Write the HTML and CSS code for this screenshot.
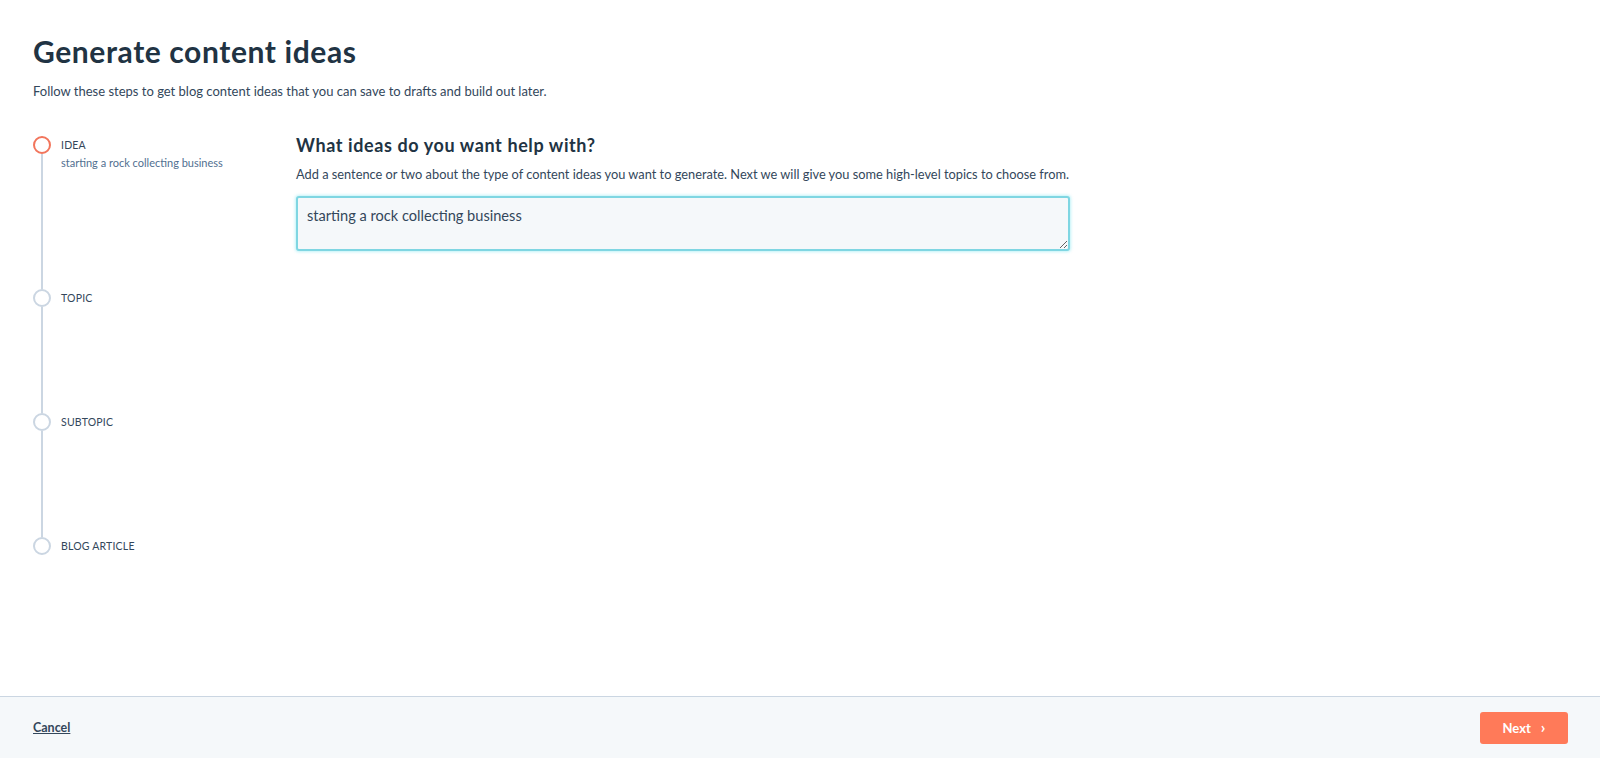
FILE: index.html
```html
<!DOCTYPE html>
<html lang="en">
<head>
    <meta charset="UTF-8">
    <meta name="viewport" content="width=device-width, initial-scale=1.0">
    <title>Generate content ideas</title>
    <link rel="stylesheet" href="styles.css">
</head>
<body>
    <div class="page">
        <main class="main">
            <h1 class="title">Generate content ideas</h1>
            <p class="intro">Follow these steps to get blog content ideas that you can save to drafts and build out later.</p>

            <div class="wizard">
                <ol class="steps">
                    <li class="step active">
                        <div class="rail"><span class="dot"></span><span class="line"></span></div>
                        <div class="step-text">
                            <div class="step-label">IDEA</div>
                            <div class="step-sub">starting a rock collecting business</div>
                        </div>
                    </li>
                    <li class="step">
                        <div class="rail"><span class="dot"></span><span class="line"></span></div>
                        <div class="step-text">
                            <div class="step-label">TOPIC</div>
                        </div>
                    </li>
                    <li class="step">
                        <div class="rail"><span class="dot"></span><span class="line"></span></div>
                        <div class="step-text">
                            <div class="step-label">SUBTOPIC</div>
                        </div>
                    </li>
                    <li class="step last">
                        <div class="rail"><span class="dot"></span></div>
                        <div class="step-text">
                            <div class="step-label">BLOG ARTICLE</div>
                        </div>
                    </li>
                </ol>

                <section class="panel">
                    <h2 class="panel-title">What ideas do you want help with?</h2>
                    <p class="panel-help">Add a sentence or two about the type of content ideas you want to generate. Next we will give you some high-level topics to choose from.</p>
                    <textarea class="idea-input">starting a rock collecting business</textarea>
                </section>
            </div>
        </main>

        <footer class="footer">
            <a href="#" class="cancel">Cancel</a>
            <button class="next">Next <span class="chev">&#8250;</span></button>
        </footer>
    </div>
</body>
</html>
```

FILE: styles.css
```css
body { margin: 0; font-family: Lato, "Open Sans", sans-serif; color: #33475b; background: #fff; }
.page { display: flex; flex-direction: column; height: 100vh; }
.main { flex: 1; padding: 30px 32px 0 33px; }

.title { margin: 0; font-size: 30px; line-height: 42px; font-weight: 700; color: #213343; letter-spacing: 0.6px; }
.intro { margin: 10px 0 0; font-size: 13px; line-height: 18px; color: #33475b; }

.wizard { display: flex; margin-top: 36px; }

.steps { list-style: none; margin: 0; padding: 0; width: 263px; flex-shrink: 0; }
.step { display: flex; gap: 10px; min-height: 124px; }
.step.active { min-height: 153px; }
.step.last { min-height: 0; }
.rail { display: flex; flex-direction: column; align-items: center; width: 18px; }
.dot { width: 14px; height: 14px; border: 2px solid #cbd6e2; border-radius: 50%; flex-shrink: 0; }
.step.active .dot { border-color: #f2755c; }
.line { flex: 1; width: 2px; background: #cbd6e2; }
.step-text { padding-top: 1px; }
.step-label { font-size: 10.5px; line-height: 16px; color: #33475b; letter-spacing: 0.2px; }
.step-sub { margin-top: 2px; font-size: 11px; line-height: 16px; color: #516f90; }

.panel { flex: 1; max-width: 774px; }
.panel-title { margin: 0; font-size: 18px; line-height: 18px; font-weight: 700; color: #213343; letter-spacing: 0.6px; }
.panel-help { margin: 11px 0 0; font-size: 12.8px; line-height: 18px; color: #33475b; }
.idea-input {
    display: block; box-sizing: border-box; width: 100%; height: 55px; margin-top: 13px;
    padding: 8px 9px; border: 2px solid #7fd6e2; border-radius: 3px; background: #f5f8fa;
    box-shadow: 0 0 3px 1px rgba(0, 208, 228, 0.25);
    font-family: Lato, "Open Sans", sans-serif; font-size: 14.6px; line-height: 20px; color: #33475b;
    outline: none;
}

.footer {
    display: flex; justify-content: space-between; align-items: center; height: 61px;
    padding: 0 32px 0 33px; background: #f5f8fa; border-top: 1px solid #cbd6e2;
}
.cancel { font-size: 12.5px; font-weight: 700; color: #33475b; text-decoration: underline; }
.next {
    display: flex; align-items: center; justify-content: center; gap: 10px; width: 88px; height: 32px;
    border: none; border-radius: 3px; background: #ff7a59; color: #fff; cursor: pointer;
    font-family: Lato, "Open Sans", sans-serif; font-size: 13px; font-weight: 700; padding: 0;
}
.chev { font-size: 16px; line-height: 1; position: relative; top: -1px; }
```
